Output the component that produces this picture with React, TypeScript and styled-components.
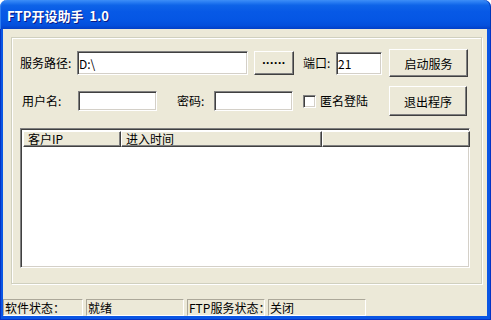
import styled, { createGlobalStyle } from 'styled-components';

const GlobalStyle = createGlobalStyle`
  html, body {
    margin: 0;
    padding: 0;
    background: #ffffff;
  }
  body {
    font-family: "Noto Sans CJK SC", "Noto Sans", sans-serif;
    font-size: 12px;
    color: #000;
  }
  * {
    box-sizing: border-box;
  }
`;

const Window = styled.div`
  width: 491px;
  height: 320px;
  display: flex;
  flex-direction: column;
`;

const TitleBar = styled.div`
  height: 29px;
  flex: none;
  display: flex;
  align-items: center;
  padding: 2px 0 0 7px;
  border-radius: 7px 7px 0 0;
  background: linear-gradient(
    to bottom,
    #3d8ef7 0%,
    #2a7ef3 7%,
    #0e64e8 18%,
    #0759e6 40%,
    #0556e4 70%,
    #044fdc 88%,
    #033fc6 100%
  );
  box-shadow: inset 1px 0 #2f7ef0, inset -1px 0 #0036b8;
`;

const TitleText = styled.span`
  color: #fff;
  font-weight: bold;
  font-size: 13px;
  white-space: pre;
  text-shadow: 1px 1px #0a1a86;
`;

const Frame = styled.div`
  flex: 1;
  display: flex;
  padding: 0 4px 4px 3px;
  background: #0a56e4;
  box-shadow: inset 1px 0 #0634c4, inset -1px 0 #0634c4, inset 0 -1px #0634c4;
`;

const Client = styled.div`
  flex: 1;
  display: flex;
  flex-direction: column;
  background: #ece9d8;
  padding: 8px 5px 0 8px;
`;

const GroupBox = styled.div`
  height: 247px;
  flex: none;
  border: 1px solid #d0d0bf;
  box-shadow: inset 1px 1px #fff, 1px 1px #fff;
  padding: 11px 0 0 8px;
  display: flex;
  flex-direction: column;
`;

const Row = styled.div<{ $h: number; $mt?: number }>`
  display: flex;
  align-items: center;
  height: ${p => p.$h}px;
  margin-top: ${p => p.$mt ?? 0}px;
`;

const Label = styled.span<{ $w: number; $ml?: number }>`
  width: ${p => p.$w}px;
  margin-left: ${p => p.$ml ?? 0}px;
  flex: none;
  white-space: nowrap;
  line-height: 14px;
`;

const TextBox = styled.input<{ $w: number; $h: number; $ml?: number }>`
  width: ${p => p.$w}px;
  height: ${p => p.$h}px;
  margin: 0 0 0 ${p => p.$ml ?? 0}px;
  flex: none;
  padding: 0 1px;
  font: inherit;
  font-size: 12px;
  color: #000;
  background: #fff;
  outline: none;
  border: 1px solid;
  border-color: #808080 #fff #fff #808080;
  box-shadow: inset 1px 1px #404040, inset -1px -1px #d4d0c8;
`;

const Button = styled.button<{ $w: number; $h: number; $ml?: number }>`
  width: ${p => p.$w}px;
  height: ${p => p.$h}px;
  margin-left: ${p => p.$ml ?? 0}px;
  flex: none;
  padding: 0;
  font: inherit;
  font-size: 12px;
  color: #000;
  background: #ece9d8;
  border: 1px solid;
  border-color: #fff #404040 #404040 #fff;
  box-shadow: inset -1px -1px #808080;
  display: flex;
  align-items: center;
  justify-content: center;
`;

const Dots = styled.span`
  font-family: "Liberation Sans", sans-serif;
  font-weight: bold;
  font-size: 12px;
  letter-spacing: 0.6px;
  padding-bottom: 7px;
`;

const CheckBox = styled.span`
  width: 13px;
  height: 13px;
  margin-left: 10px;
  flex: none;
  background: #fff;
  border: 1px solid;
  border-color: #808080 #fff #fff #808080;
  box-shadow: inset 1px 1px #404040, inset -1px -1px #d4d0c8;
`;

const ListView = styled.div`
  width: 450px;
  height: 140px;
  margin-top: 12px;
  background: #fff;
  border: 1px solid;
  border-color: #808080 #fff #fff #808080;
  box-shadow: inset 1px 1px #404040, inset -1px -1px #d4d0c8;
  padding: 2px;
`;

const Header = styled.div`
  display: flex;
  height: 16px;
`;

const HeaderCell = styled.div<{ $w: number }>`
  width: ${p => p.$w}px;
  flex: none;
  height: 16px;
  line-height: 14px;
  padding-left: 4px;
  background: #ece9d8;
  border: 1px solid;
  border-color: #fff #404040 #404040 #fff;
  box-shadow: inset -1px -1px #808080;
  white-space: nowrap;
`;

const StatusBar = styled.div`
  margin: auto 0 0 -8px;
  display: flex;
  gap: 3px;
  height: 17px;
`;

const StatusPanel = styled.div<{ $w: number }>`
  width: ${p => p.$w}px;
  flex: none;
  height: 17px;
  line-height: 15px;
  padding-left: 1px;
  border: 1px solid;
  border-color: #aca899 #fff #fff #aca899;
  white-space: nowrap;
`;

const App = () => {
  return (
    <>
      <GlobalStyle />
      <Window>
        <TitleBar>
          <TitleText>{'FTP开设助手  1.0'}</TitleText>
        </TitleBar>
        <Frame>
          <Client>
            <GroupBox>
              <Row $h={28}>
                <Label $w={57}>服务路径:</Label>
                <TextBox $w={171} $h={24} defaultValue="D:\" />
                <Button $w={40} $h={24} $ml={6}>
                  <Dots>......</Dots>
                </Button>
                <Label $w={33} $ml={9}>端口:</Label>
                <TextBox $w={46} $h={23} defaultValue="21" />
                <Button $w={79} $h={28} $ml={7}>启动服务</Button>
              </Row>
              <Row $h={30} $mt={9}>
                <Label $w={56} $ml={2}>用户名:</Label>
                <TextBox $w={79} $h={20} />
                <Label $w={37} $ml={20}>密码:</Label>
                <TextBox $w={79} $h={20} />
                <CheckBox />
                <Label $w={66} $ml={4}>匿名登陆</Label>
                <Button $w={78} $h={30} $ml={3}>退出程序</Button>
              </Row>
              <ListView>
                <Header>
                  <HeaderCell $w={98}>客户IP</HeaderCell>
                  <HeaderCell $w={201}>进入时间</HeaderCell>
                  <HeaderCell $w={148} />
                </Header>
              </ListView>
            </GroupBox>
            <StatusBar>
              <StatusPanel $w={80}>软件状态：</StatusPanel>
              <StatusPanel $w={98}>就绪</StatusPanel>
              <StatusPanel $w={78}>FTP服务状态：</StatusPanel>
              <StatusPanel $w={98}>关闭</StatusPanel>
            </StatusBar>
          </Client>
        </Frame>
      </Window>
    </>
  );
};

export default App;
